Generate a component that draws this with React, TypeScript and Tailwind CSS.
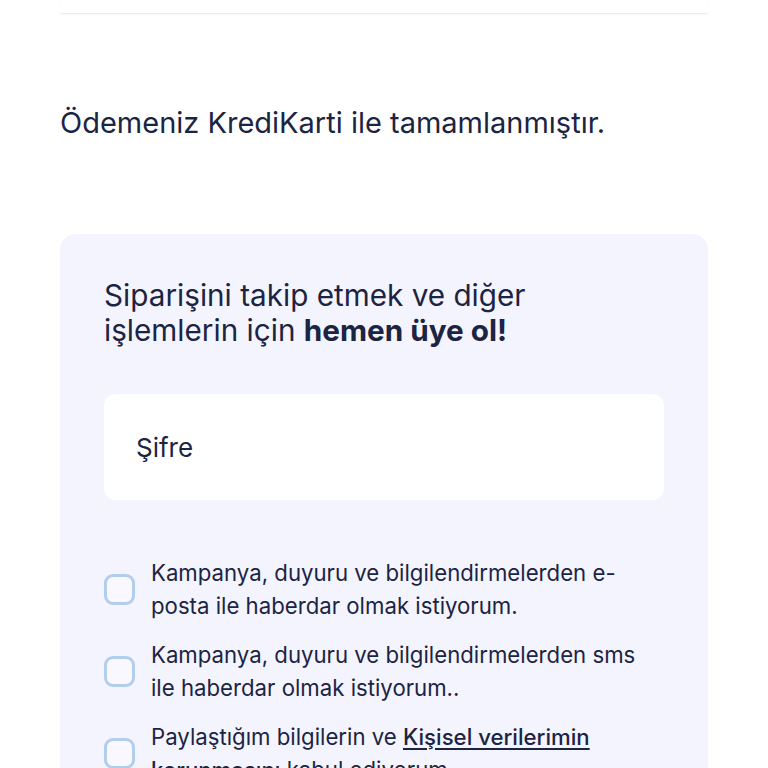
import React from 'react';

const consents = [
  { id: 'email', text: <>Kampanya, duyuru ve bilgilendirmelerden e-posta ile haberdar olmak istiyorum.</> },
  { id: 'sms', text: <>Kampanya, duyuru ve bilgilendirmelerden sms ile haberdar olmak istiyorum..</> },
  {
    id: 'kvkk',
    text: (
      <>
        Paylaştığım bilgilerin ve{' '}
        <a href="#" className="font-medium underline underline-offset-[3px] decoration-[1.5px]">
          Kişisel verilerimin korunmasını
        </a>{' '}
        kabul ediyorum.
      </>
    ),
  },
];

function CheckBox() {
  return <span className="h-[31px] w-[31px] shrink-0 rounded-[9px] border-[3px] border-[#b3cdec] bg-white/40" />;
}

export default function App() {
  return (
    <div className="min-h-[768px] bg-white px-[60px] text-[#1c2443]" style={{ fontFamily: 'Inter, "Noto Sans", sans-serif' }}>
      <div className="h-[14px] border-b border-[#ececee] shadow-[0_1px_2px_rgba(0,0,0,0.03)]" />

      <p className="mt-[91px] text-[29px] leading-[36px]">Ödemeniz KrediKarti ile tamamlanmıştır.</p>

      {/* üyelik kartı */}
      <div className="mt-[93px] rounded-2xl bg-[#f4f4fe] px-[44px] pt-[44px] pb-10">
        <h2 className="text-[29.7px] leading-[35px]">
          Siparişini takip etmek ve diğer
          <br />
          işlemlerin için <b className="font-bold">hemen üye ol!</b>
        </h2>

        <div className="mt-[46px] flex h-[106px] items-center rounded-xl bg-white pl-8 text-[26px]">Şifre</div>

        <div className="mt-[56px] flex flex-col gap-4">
          {consents.map((c) => (
            <label key={c.id} className="flex items-center gap-4">
              <CheckBox />
              <span className="text-[22.2px] leading-[33px]">{c.text}</span>
            </label>
          ))}
        </div>
      </div>
    </div>
  );
}
